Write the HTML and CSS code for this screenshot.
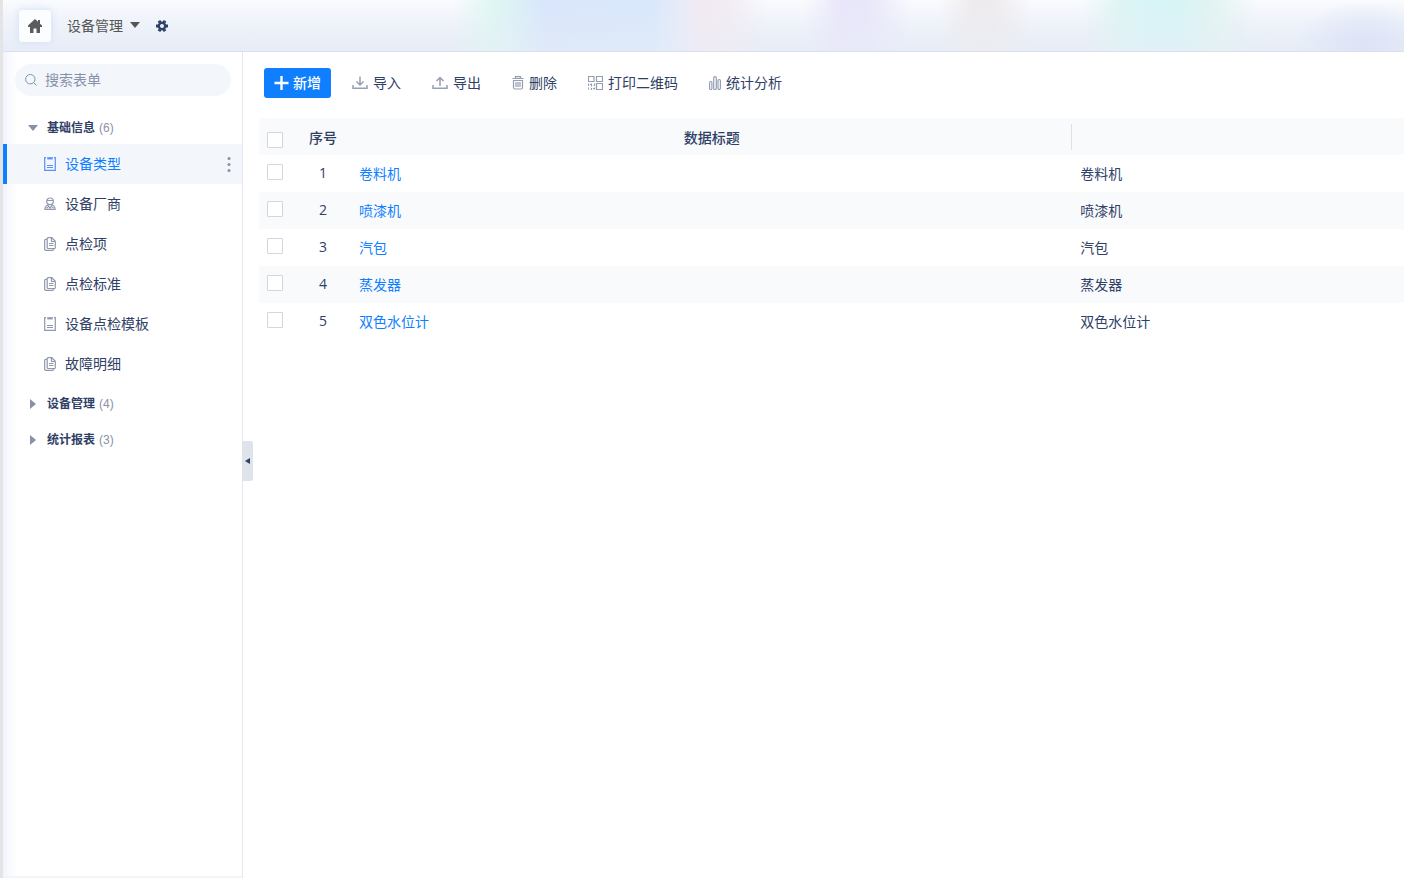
FILE: index.html
```html
<!DOCTYPE html>
<html lang="zh-CN">
<head>
<meta charset="utf-8">
<title>设备管理</title>
<link rel="stylesheet" href="styles.css">
</head>
<body>
<svg class="sprite" aria-hidden="true">
  <symbol id="i-clip" viewBox="0 0 12 14"><path d="M2 .7H.7v12.600h10.600V.7H10" fill="none" stroke="currentColor" stroke-width="1.200"/><path d="M3.200 1.300h5.600" stroke="currentColor" stroke-width="2.200"/><path d="M3 8.500h6M3 10.500h6" stroke="currentColor" stroke-width="1.200"/></symbol>
  <symbol id="i-docs" viewBox="0 0 12 14"><path d="M4.200.7h3.600l3.500 3.600v6.400q0 .8-.8.8H4.200q-1 0-1-.8V1.500q0-.8 1-.8zM7.500.7v3.800h3.800M2.500 2.300H1.700q-1 0-1 1v9q0 1 1 1h6.800q1 0 1-1v-.5M5 6.500h4.500M5 8.500h4.500" fill="none" stroke="currentColor" stroke-width="1.200"/></symbol>
  <symbol id="i-user" viewBox="0 0 12 14"><g fill="none" stroke="currentColor" stroke-width="1.200"><circle cx="6" cy="4.300" r="3.300"/><path d="M3 3.500h6M4.500 7.500C2 8.500.9 9.500.9 12.300h10.200c0-2.800-1.100-3.800-3.600-4.800M3.800 8.500 6 11l2.200-2.500M6 10v2.300M2.500 10.700H4M8 10.700h1.500"/></g></symbol>
</svg>
<div class="app">
  <header class="topbar">
    <button class="home" type="button" aria-label="首页"><svg width="14" height="14" viewBox="0 0 14 14"><path d="M7 0 0 6.600V8h2v6h3.500V9.500h3V14H12V8h2V6.600l-2-1.900V1h-2v1.800z" fill="currentColor"/></svg></button>
    <button class="app-name" type="button">设备管理<svg width="10" height="8" viewBox="0 0 10 8"><path d="M0 0h10L5 6z" fill="currentColor"/></svg></button>
    <button class="gear" type="button" aria-label="设置"><svg width="12" height="12" viewBox="0 0 12 12"><g fill="none" stroke="currentColor"><circle cx="6" cy="6" r="3.200" stroke-width="2.400"/><path d="M10 6h2M8 9.460l1 1.740M4 9.460l-1 1.740M2 6H0M4 2.540 3 .8M8 2.540 9 .8" stroke-width="3"/></g></svg></button>
  </header>
  <div class="body">
    <aside class="sidebar">
      <label class="search"><svg width="12" height="12" viewBox="0 0 12 12"><path d="M8.800 8.800 11.500 11.500M10 5.200a4.700 4.700 0 1 1-9.400 0 4.700 4.700 0 0 1 9.400 0z" fill="none" stroke="currentColor"/></svg><input type="text" placeholder="搜索表单" aria-label="搜索表单"></label>
      <nav class="tree">
        <button class="group" type="button"><svg class="caret" viewBox="0 0 10 10"><path d="M0 2h10L5 8z" fill="currentColor"/></svg><b>基础信息</b><span>(6)</span></button>
        <div class="item active"><a href="#"><svg class="ico"><use href="#i-clip"/></svg>设备类型</a><button class="more" type="button" aria-label="更多"><svg width="4" height="15" viewBox="0 0 4 15"><g fill="currentColor"><circle cx="2" cy="1.500" r="1.500"/><circle cx="2" cy="7.500" r="1.500"/><circle cx="2" cy="13.500" r="1.500"/></g></svg></button></div>
        <div class="item"><a href="#"><svg class="ico"><use href="#i-user"/></svg>设备厂商</a></div>
        <div class="item"><a href="#"><svg class="ico"><use href="#i-docs"/></svg>点检项</a></div>
        <div class="item"><a href="#"><svg class="ico"><use href="#i-docs"/></svg>点检标准</a></div>
        <div class="item"><a href="#"><svg class="ico"><use href="#i-clip"/></svg>设备点检模板</a></div>
        <div class="item"><a href="#"><svg class="ico"><use href="#i-docs"/></svg>故障明细</a></div>
        <button class="group" type="button"><svg class="caret" viewBox="0 0 10 10"><path d="M2 0v10l6-5z" fill="currentColor"/></svg><b>设备管理</b><span>(4)</span></button>
        <button class="group" type="button"><svg class="caret" viewBox="0 0 10 10"><path d="M2 0v10l6-5z" fill="currentColor"/></svg><b>统计报表</b><span>(3)</span></button>
      </nav>
      <button class="collapse" type="button" aria-label="收起"><svg width="5" height="6" viewBox="0 0 5 6"><path d="M5 0v6L0 3z" fill="currentColor"/></svg></button>
    </aside>
    <main class="content">
      <div class="toolbar">
        <button class="primary" type="button"><svg width="15" height="14" viewBox="0 0 15 14"><path d="M7.500 0v14M.5 7h14" stroke="currentColor" stroke-width="2.400"/></svg>新增</button>
        <button class="tool" type="button"><svg width="16" height="14" viewBox="0 0 16 14"><path d="M8 .5V9M4.500 5.500 8 9l3.500-3.500M1 9v3.300h14V9" fill="none" stroke="currentColor" stroke-width="1.500"/></svg>导入</button>
        <button class="tool" type="button"><svg width="16" height="14" viewBox="0 0 16 14"><path d="M8 10V1.500M4.500 5 8 1.500 11.500 5M1 9v3.300h14V9" fill="none" stroke="currentColor" stroke-width="1.500"/></svg>导出</button>
        <button class="tool" type="button"><svg width="12" height="14" viewBox="0 0 12 14"><path d="M.5 2.500h11M3.500 2V.7h5V2M1.500 4.500v7q0 1.500 1.500 1.500h6q1.500 0 1.500-1.500v-7zM4 6v5M6 6v5M8 6v5" fill="none" stroke="currentColor" stroke-width="1.200"/></svg>删除</button>
        <button class="tool" type="button"><svg width="15" height="14" viewBox="0 0 15 14"><path d="M.5.5h5.500v5H.5zM8.500.5h6v5h-6zM8.500 7.500h6v6h-6zM.5 7.500v2.500M3.500 7.500v3M6.500 7.500v2.500M.5 11.500v2M3.500 12v2M6.500 11.500v2M2 8.500h2M5 12.500h1" fill="none" stroke="currentColor" stroke-width="1.200"/></svg>打印二维码</button>
        <button class="tool" type="button"><svg width="12" height="14" viewBox="0 0 12 14"><g fill="none" stroke="currentColor" stroke-width="1.200"><rect x=".6" y="5.500" width="2.300" height="8" rx="1.100"/><rect x="4.700" y=".6" width="2.600" height="12.900" rx="1.300"/><rect x="9" y="3.500" width="2.400" height="10" rx="1.200"/></g></svg>统计分析</button>
      </div>
      <table class="grid">
        <colgroup><col class="c-check"><col class="c-no"><col class="c-title"><col></colgroup>
        <thead><tr><th><input type="checkbox" aria-label="全选"></th><th>序号</th><th class="split">数据标题</th><th></th></tr></thead>
        <tbody>
          <tr><td><input type="checkbox" aria-label="选择 1"></td><td>1</td><td><a href="#">卷料机</a></td><td>卷料机</td></tr>
          <tr><td><input type="checkbox" aria-label="选择 2"></td><td>2</td><td><a href="#">喷漆机</a></td><td>喷漆机</td></tr>
          <tr><td><input type="checkbox" aria-label="选择 3"></td><td>3</td><td><a href="#">汽包</a></td><td>汽包</td></tr>
          <tr><td><input type="checkbox" aria-label="选择 4"></td><td>4</td><td><a href="#">蒸发器</a></td><td>蒸发器</td></tr>
          <tr><td><input type="checkbox" aria-label="选择 5"></td><td>5</td><td><a href="#">双色水位计</a></td><td>双色水位计</td></tr>
        </tbody>
      </table>
    </main>
  </div>
</div>
</body>
</html>
```

FILE: styles.css
```css
* { box-sizing: border-box; }

body {
  margin: 0;
  color: #2f4066;
  font: 14px/20px "Open Sans", "Noto Sans CJK SC", sans-serif;
  background: #fff;
}

button {
  display: flex;
  align-items: center;
  margin: 0;
  padding: 0;
  border: 0;
  background: none;
  color: inherit;
  font: inherit;
  cursor: pointer;
}

a { color: inherit; text-decoration: none; }
svg { flex: none; }

.sprite { position: absolute; width: 0; height: 0; }

.app {
  display: flex;
  flex-direction: column;
  min-height: 100vh;
  border-left: 3px solid #e4e4e6;
}

/* Top bar */
.topbar {
  display: flex;
  align-items: center;
  height: 52px;
  padding: 0 16px;
  border-bottom: 1px solid #dce0ea;
  background:
    linear-gradient(#fafbfe00 0, #e7edf780 100%),
    linear-gradient(90deg,
      #f5f8fd00 450px, #dff7f2 490px, #dcf1f6 510px, #d8e5fb 545px,
      #d9e8fb 650px, #e6ebf8 675px, #f4e9f2 700px, #f3ecf3 725px,
      #f5f7fb00 765px, #f5f7fb00 800px, #e9e5fa 840px, #e9e7fa 865px,
      #f5f7fb00 910px, #f5f7fb00 935px, #eeebed 970px, #eeebed 990px,
      #f5f7fb00 1030px, #f5f3f800 1080px, #dff5f3 1115px, #d7f4f6 1145px,
      #d8f4f5 1180px, #e2f4f1 1210px, #f5f7fb00 1255px),
    radial-gradient(ellipse 75px 50px at 1362px 51px, #d4daf6 0, #d4daf600 100%),
    linear-gradient(#fafbfe, #e7edf7);
}

.home {
  justify-content: center;
  width: 32px;
  height: 32px;
  border-radius: 4px;
  background: #fcfdff;
  box-shadow: 0 0 8px #d3def4;
  color: #5c5c5e;
}

.app-name { gap: 7px; margin-left: 16px; color: #555; }
.gear { margin-left: 16px; color: #2f4066; }

/* Sidebar */
.body { display: flex; flex: 1; }

.sidebar {
  position: relative;
  flex: none;
  width: 240px;
  border-right: 1px solid #e4e7f0;
  background: linear-gradient(90deg, #f2f3fb, #fafbff 7px, #fff 15px);
  box-shadow: inset 0 -2px #f3f4f9;
}

.search {
  display: flex;
  align-items: center;
  gap: 8px;
  height: 32px;
  margin: 12px 11px 16px 12px;
  padding: 0 10px;
  border-radius: 16px;
  background: #f3f7fc;
  color: #8792a8;
}

.search input {
  flex: 1;
  min-width: 0;
  padding: 0;
  border: 0;
  outline: 0;
  background: none;
  color: inherit;
  font: inherit;
}

.search input::placeholder { color: #8792a8; opacity: 1; }

.group {
  width: 100%;
  height: 32px;
  padding-left: 25px;
  font-size: 12px;
}

.item + .group, .group + .group { margin-top: 4px; }

.group b { margin: 0 4px 0 9px; font-weight: 600; }
.group span { color: #8792a8; font-family: "Liberation Sans", sans-serif; }
.caret { width: 10px; height: 10px; color: #8792a8; }

.item {
  display: flex;
  align-items: center;
  height: 40px;
  padding: 0 11px 0 37px;
  border-left: 4px solid transparent;
}

.item a { display: flex; flex: 1; align-items: center; gap: 9px; }
.ico { width: 12px; height: 14px; color: #8f99ad; }
.item.active { border-color: #107fff; background: #f3f7fc; color: #107fff; }
.item.active .ico { color: #5b8ff9; }
.more { color: #8792a8; }

.collapse {
  position: absolute;
  top: 389px;
  left: 100%;
  justify-content: center;
  width: 11px;
  height: 40px;
  border-radius: 0 2px 2px 0;
  background: #dfe3ec;
}

/* Content */
.content { flex: 1; min-width: 0; padding: 16px 0 0 16px; }

.toolbar { display: flex; align-items: center; gap: 31px; padding-left: 5px; }

.primary {
  gap: 4px;
  height: 30px;
  margin-right: -10px;
  padding: 0 10px;
  border-radius: 3px;
  background: #107fff;
  color: #fff;
  font-weight: 500;
}

.tool { gap: 5px; }
.tool svg { color: #959fb2; }

.grid {
  width: 100%;
  margin-top: 20px;
  border-collapse: collapse;
  table-layout: fixed;
}

.c-check { width: 36px; }
.c-no { width: 56px; }
.c-title { width: 63%; }

.grid th, .grid td { height: 37px; padding: 0 8px; text-align: left; }
.grid th { padding-top: 2px; background: #f9fafc; font-weight: 500; text-align: center; }
.grid td:nth-child(2) { padding-bottom: 2px; text-align: center; }
.grid tbody tr:nth-child(even) { background: #f9fafc; }
.grid td a { color: #107fff; }
.grid .split { background: linear-gradient(#dde0e8, #dde0e8) right center / 1px 26px no-repeat #f9fafc; }

.grid input {
  display: block;
  width: 16px;
  height: 16px;
  margin: 0 0 4px;
  border: 1px solid #d3d6dc;
  border-radius: 1px;
  background: #fff;
  appearance: none;
}

.grid th input { margin: 4px 0 0; }
```
